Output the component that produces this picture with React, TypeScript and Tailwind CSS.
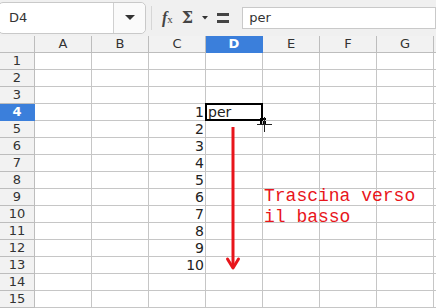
import React from 'react';

const cols = ['A', 'B', 'C', 'D', 'E', 'F', 'G', 'H'];
const rows = Array.from({ length: 16 }, (_, i) => i + 1);

export default function App() {
  return (
    <div className="relative w-[436px] h-[308px] overflow-hidden bg-white font-['DejaVu_Sans',sans-serif] text-[#333]">
      {/* Toolbar */}
      <div className="flex items-center h-[36px] bg-[#f0f0f0]">
        <div className="flex items-stretch h-[32px] w-[148px] -ml-[2px] bg-white border border-[#c9c9c9] rounded-[5px]">
          <div className="flex-1 flex items-center pl-[10px] text-[13px] text-[#333]">D4</div>
          <div className="w-[32px] flex items-center justify-center border-l border-[#d0d0d0] bg-[#fafafa] rounded-r-[5px]">
            <svg width="10" height="6" viewBox="0 0 10 6">
              <path d="M0 0 L10 0 L5 5 Z" fill="#333" />
            </svg>
          </div>
        </div>
        <div className="w-px h-[24px] bg-[#d6d6d6] ml-[5px]" />
        <div className="flex items-center ml-[10px] gap-[9px] text-[#444]">
          <span className="font-['Liberation_Serif',serif] italic text-[16px] font-bold leading-none">
            f<span className="text-[11px] not-italic font-normal">x</span>
          </span>
          <span className="font-['DejaVu_Serif',serif] text-[16px] font-bold leading-none">Σ</span>
          <svg width="6" height="4" viewBox="0 0 6 4">
            <path d="M0 0 L6 0 L3 3.5 Z" fill="#333" />
          </svg>
          <svg width="12" height="10" viewBox="0 0 12 10">
            <rect x="0" y="0" width="12" height="3" fill="#444" />
            <rect x="0" y="7" width="12" height="3" fill="#444" />
          </svg>
        </div>
        <div className="ml-[13px] flex-1 h-[22px] bg-white border border-[#c9c9c9] flex items-center pl-[6px] text-[13px] text-[#333]">
          per
        </div>
      </div>

      {/* Grid */}
      <div className="grid grid-cols-[35px_repeat(8,57px)] auto-rows-[17px] text-[13px]">
        <div className="bg-[#f2f2f2] border-r border-b border-[#bdbdbd]" />
        {cols.map((c) => (
          <div
            key={c}
            className={`flex items-center justify-center border-r border-b ${
              c === 'D'
                ? 'bg-[#3b7fdb] text-white font-bold border-[#3b7fdb]'
                : 'bg-[#f2f2f2] border-[#bdbdbd]'
            }`}
          >
            {c === 'H' ? '' : c}
          </div>
        ))}
        {rows.map((r) => (
          <React.Fragment key={r}>
            <div
              className={`flex items-center justify-center border-r border-b ${
                r === 4
                  ? 'bg-[#3b7fdb] text-white font-bold border-[#3b7fdb]'
                  : 'bg-[#f2f2f2] border-[#bdbdbd]'
              }`}
            >
              {r < 16 ? r : ''}
            </div>
            {cols.map((c) => (
              <div
                key={c}
                className={`relative flex items-center border-r border-b border-[#c6c6c6] text-[14px] text-[#222] ${
                  c === 'C' ? 'justify-end pr-[1px]' : 'pl-[2px]'
                }`}
              >
                {c === 'C' && r >= 4 && r <= 13 ? r - 3 : null}
                {c === 'D' && r === 4 ? 'per' : null}
                {c === 'D' && r === 4 && (
                  <>
                    <div className="absolute -left-px -top-px w-[58px] h-[18px] border-2 border-black" />
                    <div className="absolute right-[-4px] bottom-[-4px] w-[6px] h-[6px] bg-black" />
                  </>
                )}
              </div>
            ))}
          </React.Fragment>
        ))}
      </div>

      {/* Cursor */}
      <svg className="absolute left-[257px] top-[117px]" width="15" height="15" viewBox="0 0 15 15">
        <path d="M7.5 0 V15 M0 7.5 H15" stroke="#222" strokeWidth="1" />
      </svg>

      {/* Red arrow */}
      <svg className="absolute left-[225px] top-[125px]" width="16" height="148" viewBox="0 0 16 148">
        <path d="M8 2 V140" stroke="#e8151b" strokeWidth="3" />
        <path d="M2.5 134 L8 143 L13.5 134" stroke="#e8151b" strokeWidth="3" fill="none" strokeLinecap="round" strokeLinejoin="round" />
      </svg>

      <div className="absolute left-[264px] top-[186px] font-['Liberation_Mono',monospace] text-[18px] leading-[21px] text-[#e8151b]">
        Trascina verso
        <br />
        il basso
      </div>
    </div>
  );
}
